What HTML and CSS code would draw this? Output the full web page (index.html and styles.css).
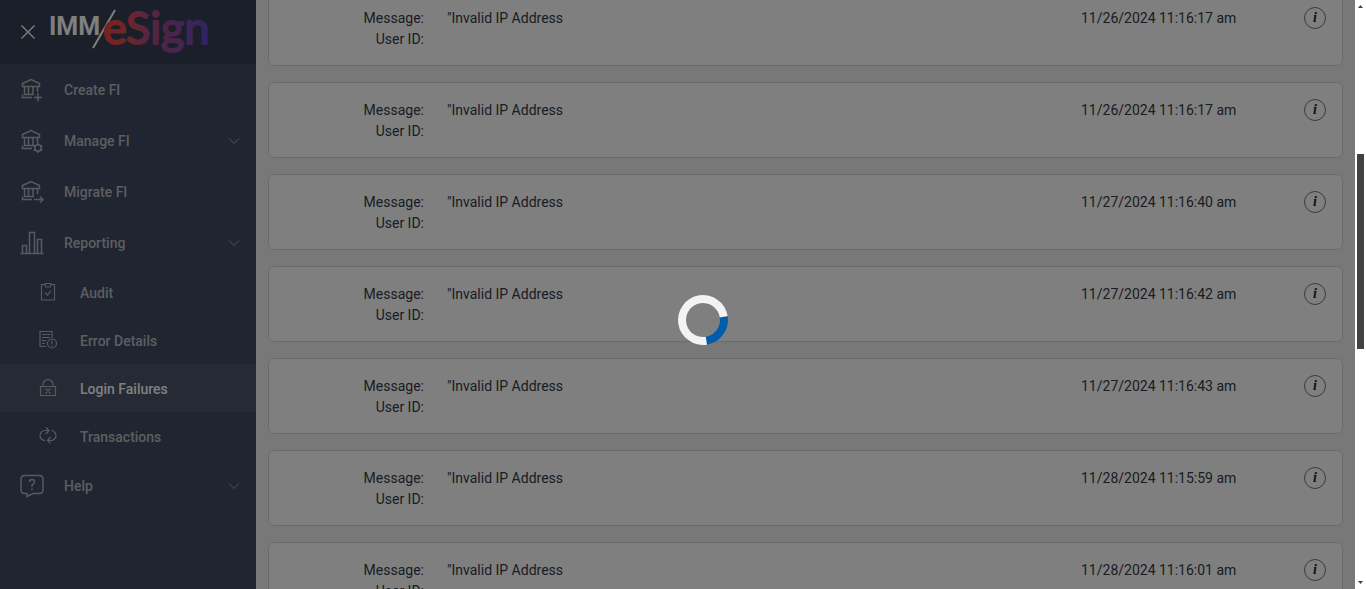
FILE: index.html
```html
<!DOCTYPE html>
<html lang="en">
<head>
  <meta charset="UTF-8" />
  <meta name="viewport" content="width=device-width, initial-scale=1.0" />
  <title>IMM eSign - Login Failures</title>
  <link rel="stylesheet" href="styles.css">
</head>
<body>
  <!-- SHARED ICONS -->
  <svg class="icon-defs" aria-hidden="true">
    <symbol id="bank" viewBox="0 0 24 24">
      <path d="M2.500 5.500 L11 1.500 L19.500 5.500 V8.500 H2.500 Z M4.500 9 V16.500 M8.500 9 V16.500 M13 9 V16.500 M17.500 9 V14 M4 16.500 H14 M12 19.500 H2.500 V16.500" />
    </symbol>
    <symbol id="chevron" viewBox="0 0 12 8">
      <path d="M1 1.500 L6 6.500 L11 1.500" />
    </symbol>
  </svg>

  <div class="app">
    <!-- SIDEBAR -->
    <aside class="sidebar">
      <header class="brand">
        <button class="btn-close" type="button" aria-label="Close menu">
          <svg viewBox="0 0 14 14"><path d="M0.500 0.500 L13.500 13.500 M13.500 0.500 L0.500 13.500" /></svg>
        </button>
        <svg class="logo" viewBox="0 0 158 48" role="img" aria-label="IMM/eSign">
          <defs>
            <linearGradient id="logoFill" gradientUnits="userSpaceOnUse" x1="54" y1="0" x2="156" y2="0">
              <stop offset="0" stop-color="#f04444" />
              <stop offset="0.200" stop-color="#e84a4c" />
              <stop offset="0.450" stop-color="#a84a80" />
              <stop offset="0.750" stop-color="#8c48a0" />
              <stop offset="1" stop-color="#6048c8" />
            </linearGradient>
          </defs>
          <text class="logo-imm" x="-1" y="27">IMM</text>
          <path class="logo-slash" d="M65 2 L43 40" />
          <text class="logo-esign" x="53" y="36">eSign</text>
        </svg>
      </header>

      <nav class="menu">
        <a class="menu-item" href="#">
          <svg class="icon" viewBox="0 0 24 24"><use href="#bank" /><path d="M18 15 V23.500 M14 19.500 H22" /></svg>
          <span>Create FI</span>
        </a>
        <a class="menu-item" href="#">
          <svg class="icon" viewBox="0 0 24 24"><use href="#bank" /><circle cx="18" cy="19" r="3.200" /><path d="M18 14 V16 M18 22 V24 M13.700 16.500 L15.400 17.500 M20.600 20.500 L22.300 21.500 M13.700 21.500 L15.400 20.500 M20.600 17.500 L22.300 16.500" /></svg>
          <span>Manage FI</span>
          <svg class="chevron"><use href="#chevron" /></svg>
        </a>
        <a class="menu-item" href="#">
          <svg class="icon" viewBox="0 0 24 24"><use href="#bank" /><path d="M14 19.500 H23 M20 16.500 L23 19.500 L20 22.500" /></svg>
          <span>Migrate FI</span>
        </a>
        <a class="menu-item" href="#">
          <svg class="icon" viewBox="0 0 24 24"><path d="M0.500 22.500 H23.500 M2.500 22.500 V14.500 H6.500 V22.500 M9.500 22.500 V1.500 H14.500 V22.500 M17.500 22.500 V8.500 H21.500 V22.500" /></svg>
          <span>Reporting</span>
          <svg class="chevron"><use href="#chevron" /></svg>
        </a>

        <a class="menu-item sub-item" href="#">
          <svg class="icon" viewBox="0 0 18 18"><path d="M6 1.500 H2.500 V17 H15.500 V1.500 H12 M6 0.500 H12 V2.500 L11 4 H7 L6 2.500 Z M6 9.500 L8.500 12 L12 7.500" /></svg>
          <span>Audit</span>
        </a>
        <a class="menu-item sub-item" href="#">
          <svg class="icon" viewBox="0 0 18 18"><path d="M7 15.500 H1 V0.500 H13 V7 M3 3.500 H11 M3 6.500 H11 M3 9.500 H7 M3 12.500 H6 M13 9.500 V13 M13 14 V15.500" /><circle cx="13" cy="12.500" r="4.500" /></svg>
          <span>Error Details</span>
        </a>
        <a class="menu-item sub-item active" href="#">
          <svg class="icon" viewBox="0 0 18 18"><path d="M1.500 7.500 H16.500 V16.500 H1.500 Z M4 7.500 V5.500 A5 5 0 0 1 14 5.500 V7.500 M6.500 9.500 L11.500 14.500 M11.500 9.500 L6.500 14.500" /></svg>
          <span>Login Failures</span>
        </a>
        <a class="menu-item sub-item" href="#">
          <svg class="icon" viewBox="0 0 18 18"><path d="M6 13.500 A5 5 0 0 1 6 3.500 H10 M7 0.500 L10 3.500 L7 7 M12 3.500 A5 5 0 0 1 12 13.500 H8.500 M11.500 10 L8.500 13.500 L11.500 16.500" /></svg>
          <span>Transactions</span>
        </a>

        <a class="menu-item" href="#">
          <svg class="icon" viewBox="0 0 24 24"><path d="M5 1.500 H19 Q23 1.500 23 5 V15.500 Q23 19.500 19 19.500 H13 L7 22.500 V19.500 H5 Q1 19.500 1 15.500 V5 Q1 1.500 5 1.500 Z M9.500 8 Q9.500 5.500 12 5.500 Q14.500 5.500 14.500 8 Q14.500 9.500 12 11 V13 M12 14.500 V16" /></svg>
          <span>Help</span>
          <svg class="chevron"><use href="#chevron" /></svg>
        </a>
      </nav>
    </aside>

    <!-- LOGIN FAILURES -->
    <main class="content">
      <article class="card">
        <dl class="details"><dt>Message:</dt><dd>"Invalid IP Address</dd><dt>User ID:</dt><dd></dd></dl>
        <time>11/26/2024 11:16:17 am</time>
        <button class="btn-info" type="button" aria-label="Details">i</button>
      </article>
      <article class="card">
        <dl class="details"><dt>Message:</dt><dd>"Invalid IP Address</dd><dt>User ID:</dt><dd></dd></dl>
        <time>11/26/2024 11:16:17 am</time>
        <button class="btn-info" type="button" aria-label="Details">i</button>
      </article>
      <article class="card">
        <dl class="details"><dt>Message:</dt><dd>"Invalid IP Address</dd><dt>User ID:</dt><dd></dd></dl>
        <time>11/27/2024 11:16:40 am</time>
        <button class="btn-info" type="button" aria-label="Details">i</button>
      </article>
      <article class="card">
        <dl class="details"><dt>Message:</dt><dd>"Invalid IP Address</dd><dt>User ID:</dt><dd></dd></dl>
        <time>11/27/2024 11:16:42 am</time>
        <button class="btn-info" type="button" aria-label="Details">i</button>
      </article>
      <article class="card">
        <dl class="details"><dt>Message:</dt><dd>"Invalid IP Address</dd><dt>User ID:</dt><dd></dd></dl>
        <time>11/27/2024 11:16:43 am</time>
        <button class="btn-info" type="button" aria-label="Details">i</button>
      </article>
      <article class="card">
        <dl class="details"><dt>Message:</dt><dd>"Invalid IP Address</dd><dt>User ID:</dt><dd></dd></dl>
        <time>11/28/2024 11:15:59 am</time>
        <button class="btn-info" type="button" aria-label="Details">i</button>
      </article>
      <article class="card">
        <dl class="details"><dt>Message:</dt><dd>"Invalid IP Address</dd><dt>User ID:</dt><dd></dd></dl>
        <time>11/28/2024 11:16:01 am</time>
        <button class="btn-info" type="button" aria-label="Details">i</button>
      </article>
    </main>

    <!-- SCROLLBAR -->
    <div class="scrollbar" aria-hidden="true">
      <svg class="arrow" viewBox="0 0 5 3"><path d="M0 3 L2.500 0 L5 3 Z" /></svg>
      <div class="track"><div class="thumb"></div></div>
      <svg class="arrow" viewBox="0 0 5 3"><path d="M0 0 L2.500 3 L5 0 Z" /></svg>
    </div>
  </div>

  <!-- LOADING -->
  <div class="overlay"><div class="spinner" role="status" aria-label="Loading"></div></div>
</body>
</html>
```
FILE: styles.css
```css
/* GLOBAL */
* { box-sizing:border-box; }
body { margin:0; font-family:Roboto, sans-serif; font-size:14px; line-height:21px; color:#343a46; background:#f0f0f0; }
button { padding:0; border:none; background:none; cursor:pointer; }
.icon-defs { display:none; }
.app { display:grid; grid-template-columns:256px 1fr 11px; height:100vh; overflow:hidden; }

/* SIDEBAR */
.sidebar { background:#3e4a62; }
.brand { display:flex; align-items:center; gap:14px; height:64px; padding:0 20px; background:#343e54; }
.btn-close { width:16px; height:16px; }
.btn-close svg { display:block; width:14px; height:14px; margin:0 auto; stroke:#fff; stroke-width:1.4; fill:none; overflow:visible; }
.logo { width:158px; height:48px; overflow:visible; }
.logo-imm { font:700 25px Roboto, sans-serif; fill:#fff; }
.logo-esign { font:400 45px Lato, sans-serif; fill:url(#logoFill); stroke:url(#logoFill); stroke-width:2; stroke-linejoin:round; }
.logo-slash { stroke:#fff; stroke-width:2; }

.menu-item { display:flex; align-items:center; height:51px; padding:0 16px 0 20px; color:#b8bcc2; font-weight:500; text-decoration:none; }
.menu-item span { flex:1; padding-top:2px; }
.icon { width:24px; height:24px; margin-right:20px; fill:none; stroke:#b0b4ba; stroke-width:1.5; }
.chevron { width:12px; height:8px; fill:none; stroke:#a0a6b0; }
.sub-item { height:48px; padding-left:39px; }
.sub-item .icon { width:18px; height:18px; margin-right:23px; stroke-width:1.2; }
.sub-item.active { background:#4a5468; color:#fff; }

/* CARDS */
.content { display:flex; flex-direction:column; gap:16px; min-height:0; padding:0 12px; overflow:hidden; }
.card { display:flex; flex-shrink:0; align-items:flex-start; padding:16px 16px 15px; border:1px solid #d6d6d6; border-radius:6px; background:#fff; }
.card:first-child { margin-top:-10px; }
.details { display:grid; flex:1; grid-template-columns:139px 1fr; grid-auto-rows:21px; column-gap:23px; margin:0; padding-top:1px; }
.details dt { text-align:right; }
.details dd { margin:0; }
.card time { width:223px; padding-top:1px; }
.btn-info { width:22px; height:22px; border:1px solid #777; border-radius:50%; color:#222; font:italic 700 14px/20px "Liberation Serif", serif; text-align:center; }

/* SCROLLBAR */
.scrollbar { display:flex; flex-direction:column; align-items:center; padding:5px 0; background:#fff; }
.arrow { width:5px; height:3px; fill:#424242; }
.track { flex:1; width:100%; padding:0 2px; }
.thumb { height:34%; margin-top:146px; background:#424242; }

/* LOADING */
.overlay { position:fixed; inset:0 11px 0 0; background:rgba(0,0,0,0.5); }
.spinner { position:absolute; top:50%; left:50%; width:50px; height:50px; border:8px solid #f3f3f3; border-top-color:#005dab; border-radius:50%; transform:rotate(126deg); }
```
